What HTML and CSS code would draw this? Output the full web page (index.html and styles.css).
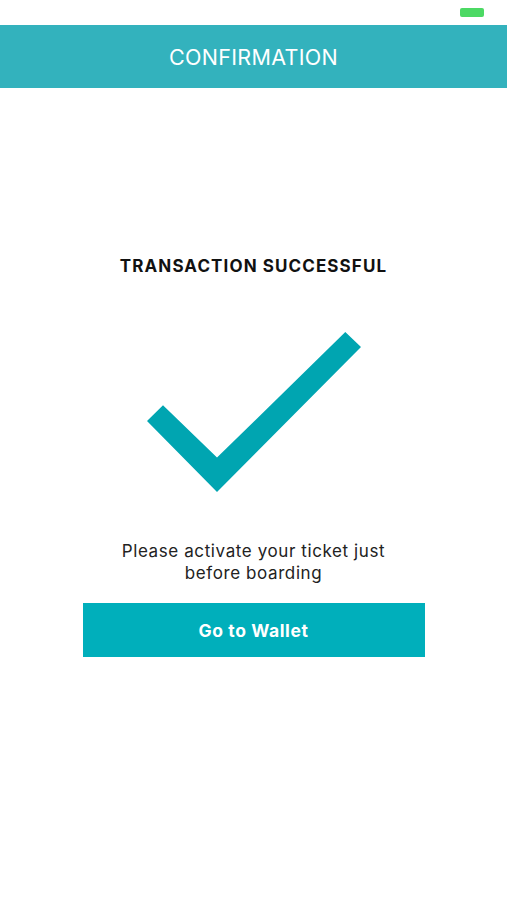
FILE: index.html
```html
<!DOCTYPE html>
<html>
<head>
<meta charset="utf-8">
<link rel="stylesheet" href="styles.css">
</head>
<body>
<div class="status"><span class="battery"></span></div>
<header class="header">CONFIRMATION</header>
<main class="main">
  <h1 class="title">TRANSACTION SUCCESSFUL</h1>
  <svg class="check" width="214" height="160" viewBox="146.7 331.7 214 160">
    <polygon fill="#00a5b1" points="162.7,405 146.7,420.7 216.7,491.7 360.7,346.7 345,331.7 216.7,457.3"/>
  </svg>
  <p class="note">Please activate your ticket just<br>before boarding</p>
  <button class="btn">Go to Wallet</button>
</main>
</body>
</html>
```
FILE: styles.css
```css
html, body { margin: 0; padding: 0; background: #fff; }
body { font-family: Inter, "Noto Sans", sans-serif; width: 507px; height: 900px; }
.status { height: 25px; display: flex; justify-content: flex-end; align-items: flex-start; padding-right: 23px; box-sizing: border-box; }
.battery { width: 24px; height: 9px; background: #4cd964; border-radius: 2px; margin-top: 8px; }
.header { height: 63px; background: #33b2bd; color: #fff; display: flex; align-items: center; justify-content: center; font-size: 21.5px; font-weight: 400; letter-spacing: 0.3px; }
.main { display: flex; flex-direction: column; align-items: center; }
.title { margin: 168px 0 0; font-size: 17px; line-height: 20px; font-weight: 700; color: #111; letter-spacing: 1.1px; }
.check { display: block; margin-top: 56px; }
.note { margin: 48px 0 0; font-size: 17px; line-height: 22px; text-align: center; color: #222; letter-spacing: 0.6px; }
.btn { margin-top: 19px; width: 342px; height: 54px; border: none; background: #00afbb; color: #fff; font-family: Inter, sans-serif; font-size: 17.5px; font-weight: 700; letter-spacing: 0.6px; padding: 0; }
```
